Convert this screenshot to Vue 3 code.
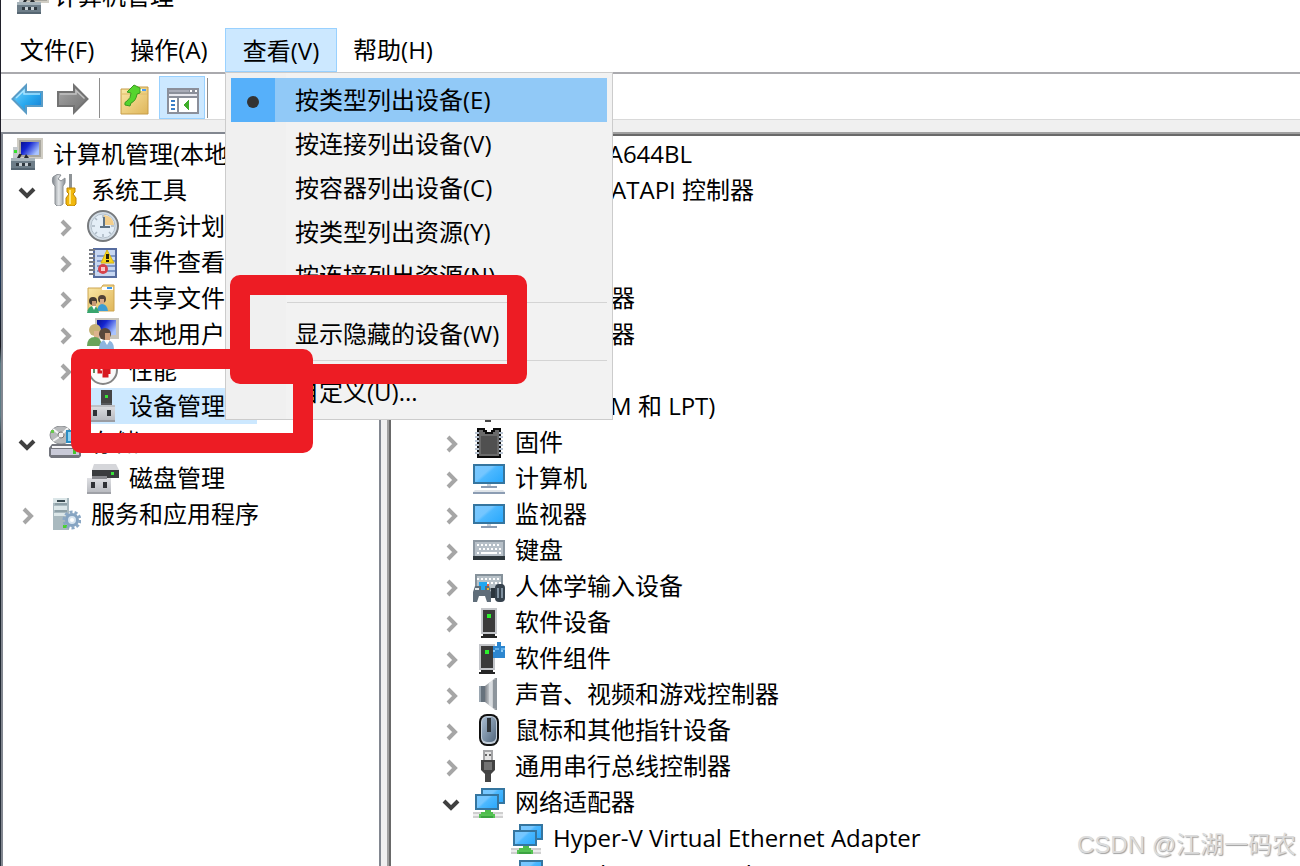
<template>
  <div class="console">
    <svg class="console__defs" aria-hidden="true">
      <defs>
        <linearGradient id="gScreen" x1="0" y1="0" x2="1" y2="0.7">
          <stop offset="0" stop-color="#7ac8ff" />
          <stop offset="0.45" stop-color="#74c6ff" />
          <stop offset="0.55" stop-color="#4cb8ff" />
          <stop offset="1" stop-color="#2fabfd" />
        </linearGradient>
        <linearGradient id="gNavy" x1="0" y1="0" x2="1" y2="0.6">
          <stop offset="0" stop-color="#0a1290" />
          <stop offset="0.4" stop-color="#1425d0" />
          <stop offset="1" stop-color="#a9c4ff" />
        </linearGradient>
        <linearGradient id="gMetal" x1="0" y1="0" x2="1" y2="0">
          <stop offset="0" stop-color="#7b8188" />
          <stop offset="0.5" stop-color="#e3e6e8" />
          <stop offset="1" stop-color="#858b91" />
        </linearGradient>
        <linearGradient id="gBlueArrow" x1="0" y1="0" x2="1" y2="1">
          <stop offset="0" stop-color="#7fd8ff" />
          <stop offset="0.55" stop-color="#29a8ee" />
          <stop offset="1" stop-color="#1479d0" />
        </linearGradient>
        <linearGradient id="gGreyArrow" x1="0" y1="0" x2="1" y2="1">
          <stop offset="0" stop-color="#a8a8a8" />
          <stop offset="1" stop-color="#6e6e6e" />
        </linearGradient>
        <linearGradient id="gFolder" x1="0" y1="0" x2="1" y2="1">
          <stop offset="0" stop-color="#fbe9a9" />
          <stop offset="1" stop-color="#dfb65a" />
        </linearGradient>
        <linearGradient id="gBox" x1="0" y1="0" x2="0" y2="1">
          <stop offset="0" stop-color="#dfe0e4" />
          <stop offset="1" stop-color="#b4b6bc" />
        </linearGradient>
        <linearGradient id="gMouse" x1="0" y1="0" x2="1" y2="1">
          <stop offset="0" stop-color="#a9bdd2" />
          <stop offset="1" stop-color="#52677d" />
        </linearGradient>
      </defs>
    </svg>

    <header class="titlebar">
      <svg class="icon" viewBox="0 0 32 32" aria-hidden="true" v-html="icons.pc"></svg>
      <span>计算机管理</span>
    </header>

    <nav class="menubar">
      <div v-for="menu in menus" :key="menu" class="menubar__slot">
        <button
          type="button"
          class="menubar__button"
          :class="{ 'menubar__button--open': menu === openMenu }"
        >
          {{ menu }}
        </button>
        <div v-if="menu === openMenu" class="dropdown" role="menu">
          <template v-for="(item, index) in viewItems" :key="index">
            <div v-if="item === null" class="dropdown__separator" role="separator"></div>
            <button
              v-else
              type="button"
              role="menuitem"
              class="dropdown__item"
              :class="{ 'dropdown__item--active': index === 0 }"
            >
              <span class="dropdown__check"><i v-if="index === 0" class="dropdown__dot"></i></span>
              <span class="dropdown__text">{{ item }}</span>
            </button>
          </template>
        </div>
      </div>
    </nav>

    <div class="toolbar">
      <button type="button" class="toolbar__button" aria-label="后退">
        <svg class="icon" viewBox="0 0 32 32">
          <path d="M1.500 16L15 2.500V9H31V23H15V29.500Z" fill="url(#gBlueArrow)" stroke="#5a9cc6" stroke-width="2" />
          <path d="M5 15L13 7.500V11H29" fill="none" stroke="#a9e4ff" stroke-width="1.500" />
        </svg>
      </button>
      <button type="button" class="toolbar__button" aria-label="前进">
        <svg class="icon" viewBox="0 0 32 32">
          <path d="M30.500 16L17 2.500V9H1V23H17V29.500Z" fill="url(#gGreyArrow)" stroke="#737373" stroke-width="2" />
          <path d="M3 11H19V7.500L27.500 15.500" fill="none" stroke="#c2c2c2" stroke-width="1.500" />
        </svg>
      </button>
      <span class="toolbar__separator"></span>
      <button type="button" class="toolbar__button toolbar__button--folder" aria-label="上一级">
        <svg class="icon" viewBox="0 0 32 32">
          <path d="M2 6H16L18 4H29V31H2Z" fill="url(#gFolder)" stroke="#c69c48" />
          <path d="M18 6H27V8H18Z" fill="#fff" />
          <path d="M23 6H27V8H23Z" fill="#4c9cf0" />
          <path d="M3 11H28" stroke="#e0bc68" />
          <path d="M6 22Q5 19 8 18Q12 15 12 10L8 9L15 2L21 5V10L18 11Q17 18 12 20L11 23Z" fill="#55d42e" stroke="#3a9a20" />
        </svg>
      </button>
      <button type="button" class="toolbar__button toolbar__button--pressed" aria-label="显示或隐藏操作窗格">
        <svg class="icon" viewBox="0 0 32 32" shape-rendering="crispEdges">
          <path d="M0 4H32V30H0Z" fill="#8b8f9a" />
          <path d="M2 6H22V8H2Z" fill="#a9acb8" />
          <path d="M23 6H25V8H23ZM28 6H30V8H28Z" fill="#fff" />
          <path d="M2 10H30V12H2Z" fill="#e8e8ee" />
          <path d="M2 14H10V28H2ZM12 14H30V28H12Z" fill="#fff" />
          <path d="M4 16H8V18H4ZM4 20H8V22H4ZM4 24H8V26H4Z" fill="#3a7ec8" />
          <path d="M22 15V26L16 21Z" fill="#3fae2a" />
        </svg>
      </button>
      <span class="toolbar__separator toolbar__separator--end"></span>
    </div>

    <main class="panes">
      <section v-for="pane in panes" :key="pane.name" class="pane" :class="`pane--${pane.name}`">
        <ul class="tree" role="tree">
          <li
            v-for="row in pane.rows"
            :key="row.label"
            class="tree__row"
            :class="`tree__row--level${row.level}`"
            role="treeitem"
            :aria-expanded="row.state ? row.state === 'open' : undefined"
          >
            <button
              v-if="row.state"
              type="button"
              class="tree__toggle"
              :class="`tree__toggle--${row.state}`"
              :aria-label="row.label"
            >
              <svg viewBox="0 0 38 36" aria-hidden="true">
                <path :d="row.state === 'open' ? 'M9 17L16 24L23 17' : 'M13 13L20 20L13 27'" />
              </svg>
            </button>
            <span class="tree__item" :class="{ 'tree__item--selected': row.selected }">
              <svg class="icon" viewBox="0 0 32 32" aria-hidden="true" v-html="icons[row.icon]"></svg>
              <span class="tree__label">{{ row.label }}</span>
            </span>
          </li>
        </ul>
      </section>
    </main>

    <div class="marker marker--tree"></div>
    <div class="marker marker--menu"></div>
    <div class="watermark">CSDN @江湖一码农</div>
  </div>
</template>

<script setup>
import { ref } from "vue";

const openMenu = ref("查看(V)");
const menus = ["文件(F)", "操作(A)", "查看(V)", "帮助(H)"];

// null is a separator
const viewItems = [
  "按类型列出设备(E)",
  "按连接列出设备(V)",
  "按容器列出设备(C)",
  "按类型列出资源(Y)",
  "按连接列出资源(N)",
  null,
  "显示隐藏的设备(W)",
  null,
  "自定义(U)...",
];

function node(level, icon, label, state = "", selected = false) {
  return { level, icon, label, state, selected };
}

const panes = [
  {
    name: "scope",
    rows: [
      node(0, "pc", "计算机管理(本地)"),
      node(1, "tools", "系统工具", "open"),
      node(2, "clock", "任务计划程序", "closed"),
      node(2, "events", "事件查看器", "closed"),
      node(2, "share", "共享文件夹", "closed"),
      node(2, "users", "本地用户和组", "closed"),
      node(2, "perf", "性能", "closed"),
      node(3, "device", "设备管理器", "", true),
      node(1, "storage", "存储", "open"),
      node(3, "disk", "磁盘管理"),
      node(1, "services", "服务和应用程序", "closed"),
    ],
  },
  {
    name: "devices",
    rows: [
      node(0, "computer", "DESKTOP-NA644BL"),
      node(1, "software", "IDE ATA/ATAPI 控制器", "closed"),
      node(1, "chip", "处理器", "closed"),
      node(1, "software", "传感器", "closed"),
      node(1, "disk", "磁盘驱动器", "closed"),
      node(1, "storage", "存储控制器", "closed"),
      node(1, "software", "打印队列", "closed"),
      node(1, "usb", "端口 (COM 和 LPT)", "closed"),
      node(1, "chip", "固件", "closed"),
      node(1, "computer", "计算机", "closed"),
      node(1, "monitor", "监视器", "closed"),
      node(1, "keyboard", "键盘", "closed"),
      node(1, "hid", "人体学输入设备", "closed"),
      node(1, "software", "软件设备", "closed"),
      node(1, "component", "软件组件", "closed"),
      node(1, "speaker", "声音、视频和游戏控制器", "closed"),
      node(1, "mouse", "鼠标和其他指针设备", "closed"),
      node(1, "usb", "通用串行总线控制器", "closed"),
      node(1, "network", "网络适配器", "open"),
      node(3, "network", "Hyper-V Virtual Ethernet Adapter"),
      node(3, "network", "iNode VPN Virtual NIC"),
    ],
  },
];

const tower = `
  <path d="M8 2H24V28H8Z" fill="#c3c5c9"/>
  <path d="M10 4H22V26H10Z" fill="#3b3b3b"/>
  <path d="M14 8H18V12H14Z" fill="#2cf02c"/>
  <path d="M10 28H22V30H24V32H8V30H10Z" fill="#262626"/>`;

const keyDots = (y, shift = 0) =>
  [4, 8, 12, 16, 20, 24].map((x) => `<path d="M${x + shift} ${y}h2v2h-2z" fill="#fff"/>`).join("");

const icons = {
  pc: `
    <path d="M6 0H32V21H6Z" fill="#d0cdc4"/><path d="M8 2H30V19H8Z" fill="#a8a69e"/>
    <path d="M10 4H28V17H10Z" fill="url(#gNavy)"/>
    <path d="M2 9H7V20H2Z" fill="#c5cacd"/><path d="M3 12H6V15H3Z" fill="#35e02c"/>
    <path d="M6 20L8 16H11L9 20ZM15 16L18 20H13Z" fill="#25292d"/>
    <path d="M0 20H24V32H0Z" fill="#6d7d88"/><path d="M0 20H24V23H0Z" fill="#a6b3ba"/><path d="M0 30H24V32H0Z" fill="#566672"/>
    <path d="M5 25H8V28H5ZM11 25H14V28H11ZM17 25H20V28H17Z" fill="#303940"/><path d="M8 25H11V28H8ZM14 25H17V28H14Z" fill="#c6ced3"/>`,
  tools: `
    <path d="M4 3Q8-1 12 1L9 5L12 7L16 4Q17 10 14 12V30L11 32H8L6 30V12Q2 9 4 3Z" fill="url(#gMetal)" stroke="#8c9196"/>
    <path d="M20 0H23V14H20Z" fill="#8e9396"/><path d="M18 14H26V18L24 20L27 24V30L25 32H19L17 30V24L20 20L18 18Z" fill="#f1b80d" stroke="#bd8508"/>
    <path d="M21 16V30" stroke="#ffe680" stroke-width="2"/>`,
  clock: `
    <circle cx="16" cy="16" r="15" fill="#d3dde6" stroke="#777a7d" stroke-width="2"/>
    <circle cx="16" cy="16" r="12" fill="#e4eef7" stroke="#b4c0cb"/>
    <path d="M17 15V5Q26 6 27 15Z" fill="#f3ce8b"/>
    <path d="M16 5V8M16 24V27M5 16H8M24 16H27M8 8L10 10M8 24L10 22M24 24L22 22" stroke="#a9b6c2" stroke-width="1.500"/>
    <path d="M17 7V17H23M13 17H18" fill="none" stroke="#5d7284" stroke-width="2"/>`,
  events: `
    <path d="M6 2H30V32H6Z" fill="#566c9f"/><path d="M8 4H28V30H8Z" fill="#c7d7f1"/>
    <path d="M10 10H28M10 15H28M10 20H28M10 25H28" stroke="#7f98c8" stroke-width="2"/>
    <path d="M2 3H8V5H2ZM2 7H8V9H2ZM2 11H8V13H2ZM2 15H8V17H2ZM2 19H8V21H2ZM2 23H8V25H2ZM2 27H8V29H2Z" fill="#787b81"/>
    <path d="M20 4L27 17H14Z" fill="#f7d51b" stroke="#d8b418"/><path d="M19 8H22V13H19ZM19 14H22V16H19Z" fill="#26220a"/>
    <circle cx="16" cy="23" r="5" fill="#d7434c"/><path d="M14 21H18V25H14Z" fill="#f8c7ca"/>`,
  share: `
    <path d="M1 6H14L16 3H27V29H1Z" fill="url(#gFolder)" stroke="#cda551"/>
    <path d="M15 5H26V8H15Z" fill="#fff"/><path d="M20 5H25V7H20Z" fill="#3c96ec"/>
    <circle cx="15" cy="17" r="4" fill="#514237"/><path d="M13 17H17V22H13Z" fill="#d6a987"/><path d="M10 29Q11 22 15 22Q20 22 21 29Z" fill="#3c9cd2"/>
    <circle cx="6" cy="19" r="4" fill="#44392f"/><path d="M5 19H9V24H5Z" fill="#c99a75"/><path d="M0 31Q1 24 6 24Q11 24 12 31Z" fill="#38a56d"/>
    <path d="M5 24L7 28L9 24Z" fill="#fff"/>`,
  users: `
    <path d="M8 0H32V21H8Z" fill="#c9c6bd"/><path d="M10 2H29V17H10Z" fill="url(#gNavy)"/>
    <circle cx="8" cy="12" r="6" fill="#c6b276"/><path d="M7 13H12V20H7Z" fill="#dcb38e"/><path d="M0 28Q0 19 8 19Q14 19 15 28Z" fill="#69a35a"/>
    <circle cx="18" cy="16" r="6" fill="#59473a"/><path d="M18 15H23V23H18Z" fill="#cf9d79"/><path d="M12 31Q12 22 19 22Q27 22 27 31Z" fill="#8db5df"/>
    <path d="M17 22L20 27L23 22Z" fill="#fff"/>`,
  perf: `
    <circle cx="16" cy="16" r="14" fill="#fafafa" stroke="#858585" stroke-width="2"/>
    <path d="M7 13V19" stroke="#648a62" stroke-width="2"/>
    <path d="M12 14V18H15M17 14V22H20V15M22 20V14" fill="none" stroke="#d71920" stroke-width="3"/>`,
  device: `
    <path d="M14 0H25V16H14Z" fill="#454545"/><path d="M18 5H21V8H18Z" fill="#38e336"/>
    <path d="M0 15H28V32H0Z" fill="url(#gBox)"/><path d="M0 16H28" stroke="#a2a4aa"/>
    <path d="M14 13H25V15H14Z" fill="#57595c"/><path d="M6 20H10V26H6ZM20 20H24V26H20Z" fill="#303236"/><path d="M0 30H28V32H0Z" fill="#9a9ca2"/>`,
  storage: `
    <ellipse cx="12" cy="9" rx="11" ry="9" fill="#b7b9bb" stroke="#8d9094"/><circle cx="12" cy="9" r="3" fill="#f2f2f2" stroke="#777"/>
    <path d="M4 3L9 7M19 2L14 7M4 15L10 11" stroke="#f5f5f5" stroke-width="2"/><path d="M2 4H5V7H2Z" fill="#66c84b"/>
    <path d="M17 4H26V17H17Z" fill="#2c8dc3"/><path d="M19 6H24V15H19Z" fill="#8fd3f3"/>
    <path d="M3 18H29L32 22V30L30 32H2L0 30V22Z" fill="#73757d"/><path d="M3 20H29V22H3Z" fill="#f4f4f6"/>
    <path d="M2 23H30V29H2Z" fill="#c9cad8"/><path d="M24 23H27V28H24Z" fill="#42c52e"/>`,
  disk: `
    <path d="M7 2H29L32 8H5Z" fill="#d5d6da"/><path d="M5 8H32V16H5Z" fill="#3a3c3e"/><path d="M24 10H27V13H24Z" fill="#37e33a"/>
    <path d="M0 16H24V32H0Z" fill="url(#gBox)"/><path d="M5 14H20V17H5Z" fill="#88898e"/>
    <path d="M4 20H8V26H4ZM16 20H20V26H16Z" fill="#303236"/><path d="M0 30H24V32H0Z" fill="#9fa1a7"/>`,
  services: `
    <path d="M4 0H20V32H4Z" fill="#a9b9bf"/><path d="M4 0H18V5H4ZM5 8H18V12H5ZM5 15H18V18H5Z" fill="#dbe6e8"/>
    <path d="M8 2H16V4H8Z" fill="#38494f"/><path d="M6 13H18M6 6H18" stroke="#72878f"/><path d="M14 27H18V30H14Z" fill="#49d02f"/>
    <circle cx="23" cy="22" r="8" fill="none" stroke="#8ba8c5" stroke-width="3" stroke-dasharray="3 2"/>
    <circle cx="23" cy="22" r="5.500" fill="#d7e4ef" stroke="#86a4c2" stroke-width="3"/><circle cx="23" cy="22" r="2" fill="#fff"/>`,
  chip: `
    <path d="M4 2H12V4H14V6H18V4H20V2H28V32H4Z" fill="#0b0b0b"/>
    <path d="M6 4H10V6H12V8H20V6H22V4H26V30H6Z" fill="#6a6a6a"/><path d="M8 10H24V28H8Z" fill="#505050"/>
    <path d="M2 6H6V8H2ZM2 10H6V12H2ZM2 14H6V16H2ZM2 18H6V20H2ZM2 22H6V24H2ZM2 26H6V28H2ZM26 6H30V8H26ZM26 10H30V12H26ZM26 14H30V16H26ZM26 18H30V20H26ZM26 22H30V24H26ZM26 26H30V28H26Z" fill="#b7c2d0"/>`,
  computer: `
    <path d="M1 3H31V21H1Z" fill="url(#gScreen)" stroke="#35759f" stroke-width="2"/>
    <path d="M14 22H18V24H14Z" fill="#c9d0d9"/><path d="M8 24H24V26H8Z" fill="#8c9db3"/>
    <path d="M2 28H30L32 30H0Z" fill="#dfe4e9"/><path d="M0 30H32V32H0Z" fill="#8c9db3"/>`,
  monitor: `
    <path d="M1 7H31V25H1Z" fill="url(#gScreen)" stroke="#35759f" stroke-width="2"/>
    <path d="M14 26H18V28H14Z" fill="#c9d0d9"/><path d="M8 28H24V30H8Z" fill="#8c9db3"/>`,
  keyboard: `
    <path d="M0 6H32V26H0Z" fill="#8d98a2"/><path d="M2 8H30V22H2Z" fill="#b7c0c8"/>
    ${keyDots(10)}${keyDots(14, 2)}<path d="M4 18H6V20H4ZM8 18H24V20H8ZM26 18H28V20H26Z" fill="#fff"/>
    <path d="M0 22H32V26H0Z" fill="#2d363b"/>`,
  hid: `
    <path d="M2 4H30V20H2Z" fill="#85919a"/><path d="M4 6H28V18H4Z" fill="#b7c1c8"/>${keyDots(8)}${keyDots(12, 2)}
    <path d="M2 16H16L18 22V32H14L12 26H6L4 32H0V22Z" fill="#5f6d79"/><path d="M6 12H14V16H12V20H8V16H6Z" fill="#22a7f1"/>
    <path d="M14 14H16V16H14Z" fill="#f15b3e"/><path d="M14 18H16V20H14Z" fill="#f5b42c"/><path d="M2 18H6V20H2Z" fill="#e6e9eb"/>
    <path d="M18 18H22V28H18Z" fill="#2b353d"/>
    <rect x="22" y="14" width="10" height="18" rx="4" fill="#36424d"/><path d="M24 18H26V28H24ZM28 18H30V28H28Z" fill="#7f909f"/>`,
  software: tower,
  component: `
    <g transform="translate(-2 0)">${tower}</g>
    <path d="M20 4H24V0H28V4H32V16H20Z" fill="#2d86cf"/><path d="M22 6H26V8H22ZM28 6H32V8H28Z" fill="#62b0ea"/>
    <path d="M20 8H22V10H20ZM28 8H30V10H28Z" fill="#8ccaf5"/>`,
  speaker: `
    <path d="M6 8H12V24H6Z" fill="#66727d"/><path d="M6 8H8V24H6Z" fill="#9aa6b0"/>
    <path d="M12 8L22 0H24V32H22L12 24Z" fill="url(#gMetal)"/><path d="M20 2H24V30H20Z" fill="#8d959c"/><path d="M16 5H19V27H16Z" fill="#d8dce0"/>`,
  mouse: `
    <rect x="6" y="0" width="20" height="32" rx="8" fill="#111"/><rect x="8" y="2" width="16" height="28" rx="6" fill="#c3ced9"/>
    <rect x="9" y="3" width="14" height="25" rx="5" fill="url(#gMouse)"/><path d="M14 4H18V18H14Z" fill="#30353a"/>`,
  usb: `
    <path d="M10 0H20V10H10Z" fill="#a3a4a6"/><path d="M12 2H18V10H12Z" fill="#e4e4e4"/><path d="M12 4H14V6H12ZM16 4H18V6H16Z" fill="#666"/>
    <path d="M8 10H22V20L18 24H12L8 20Z" fill="#424242"/><path d="M11 12H19V20H11Z" fill="#747474"/><path d="M12 24H18V32H12Z" fill="#454545"/>`,
  network: `
    <path d="M9 3H31V17H9Z" fill="url(#gScreen)" stroke="#35759f" stroke-width="2"/>
    <path d="M0 26H30V32H0Z" fill="#cfcfcf"/><path d="M0 28H30V30H0Z" fill="#ececec"/>
    <path d="M3 9H25V23H3Z" fill="url(#gScreen)" stroke="#35759f" stroke-width="2"/>
    <path d="M12 24H18V26H20V32H8V26H12Z" fill="#4fbd4d"/><path d="M6 28H22V32H6Z" fill="#55c253"/><path d="M8 30H20V32H8Z" fill="#3ca341"/>`,
};
</script>

<style>
body {
  background: #ffffff;
}
</style>

<style scoped>
.console {
  position: relative;
  display: flex;
  flex-direction: column;
  height: 100vh;
  padding-left: 1px;
  overflow: hidden;
  box-sizing: border-box;
  color: #000000;
  background: linear-gradient(#20202a 0 27%, #1c3554 32%, #15151c 40%, #5c7a84 42% 48%, #182028 52%, #2c3440 100%);
  font: 24px/36px "Open Sans", "Noto Sans CJK SC", sans-serif;
  white-space: nowrap;
}

.console__defs {
  position: absolute;
  width: 0;
  height: 0;
}

button {
  margin: 0;
  padding: 0;
  border: 0;
  color: inherit;
  background: none;
  font: inherit;
}

.icon {
  display: block;
  flex: none;
  width: 32px;
  height: 32px;
}

.titlebar {
  display: flex;
  flex: none;
  align-items: flex-end;
  gap: 5px;
  height: 14px;
  padding: 0 16px 14px;
  background: #ffffff;
}

.menubar {
  display: flex;
  flex: none;
  height: 44px;
  background: #ffffff;
}

.menubar__slot {
  position: relative;
}

.menubar__button {
  min-width: 112px;
  height: 44px;
  padding: 0 16px;
  line-height: 44px;
}

.menubar__button--open {
  padding-top: 2px;
  line-height: 42px;
  background: #cce8ff;
  box-shadow: inset 0 0 0 1px #99d1ff;
}

.dropdown {
  position: absolute;
  z-index: 2;
  top: 100%;
  left: 0;
  width: 376px;
  padding: 5px;
  border: 1px solid #cccccc;
  background: linear-gradient(90deg, #f0f0f0 60px, #f2f2f2 60px);
}

.dropdown__item {
  display: flex;
  width: 100%;
  height: 44px;
  line-height: 44px;
  text-align: left;
}

.dropdown__item--active {
  background: #91c9f7;
}

.dropdown__check {
  display: flex;
  align-items: center;
  justify-content: center;
  width: 44px;
  height: 44px;
  margin-right: 20px;
}

.dropdown__item--active .dropdown__check {
  background: #56b0fa;
}

.dropdown__dot {
  width: 12px;
  height: 12px;
  margin-top: 4px;
  border-radius: 50%;
  background: #333333;
}

.dropdown__separator {
  height: 1px;
  margin: 4px 0 9px 56px;
  background: #d4d4d4;
}

.toolbar {
  display: flex;
  flex: none;
  align-items: center;
  height: 45px;
  padding-left: 10px;
  border-top: 2px solid #aaaaae;
  border-bottom: 1px solid #d9d9d9;
  background: #ffffff;
}

.toolbar__button {
  display: flex;
  align-items: center;
  justify-content: center;
  height: 44px;
  margin-top: 4px;
  margin-right: 14px;
}

.toolbar__button--folder {
  margin-left: 6px;
  margin-right: 8px;
}

.toolbar__button--pressed {
  width: 46px;
  height: 43px;
  margin: 2px 2px 0 0;
  padding-top: 4px;
  padding-left: 2px;
  box-sizing: border-box;
  border: 1px solid #99d1ff;
  background: #cce8ff;
}

.toolbar__separator {
  width: 1px;
  height: 40px;
  margin-top: 2px;
  margin-left: -4px;
  margin-right: 13px;
  background: #8d8d8d;
}

.toolbar__separator--end {
  margin-left: 0;
  margin-right: 0;
}

.panes {
  display: flex;
  flex: 1;
  min-height: 0;
  gap: 6px;
  padding-top: 12px;
  background: #f0f0f0;
}

.pane {
  overflow: hidden;
  box-sizing: border-box;
  background: #ffffff;
}

.pane--scope {
  flex: none;
  width: 380px;
  padding: 2px 0 0 8px;
  border: 2px solid #828790;
  border-bottom: 0;
}

.pane--devices {
  flex: 1;
  padding: 2px 0 0 46px;
  border-top: 2px solid #a0a0a0;
  border-left: 2px solid #a0a0a0;
  box-shadow: inset 2px 2px #696969;
}

.tree {
  margin: 0;
  padding: 0;
  list-style: none;
}

.tree__row {
  display: flex;
  height: 36px;
}

.tree__row--level2 {
  padding-left: 38px;
}

.tree__row--level3 {
  padding-left: 76px;
}

.tree__toggle {
  flex: none;
  width: 38px;
  height: 36px;
}

.tree__toggle svg {
  display: block;
  fill: none;
  stroke: #a6a6a6;
  stroke-width: 4px;
}

.tree__toggle--open svg {
  stroke: #404040;
}

.tree__item {
  display: flex;
  align-items: center;
  gap: 10px;
  padding-right: 8px;
}

.tree__item--selected {
  background: #cce8ff;
}

.marker {
  position: absolute;
  z-index: 3;
  box-sizing: border-box;
  border: 20px solid #ed1c24;
  border-radius: 10px;
  pointer-events: none;
}

.marker--tree {
  top: 349px;
  left: 71px;
  width: 242px;
  height: 104px;
}

.marker--menu {
  top: 275px;
  left: 230px;
  width: 297px;
  height: 109px;
}

.watermark {
  position: absolute;
  right: 4px;
  bottom: 3px;
  color: #dcdcdc;
  font-family: "Liberation Sans", "Noto Sans CJK SC", sans-serif;
  text-shadow: 1px 1px 1px #a0a0a0;
}
</style>
